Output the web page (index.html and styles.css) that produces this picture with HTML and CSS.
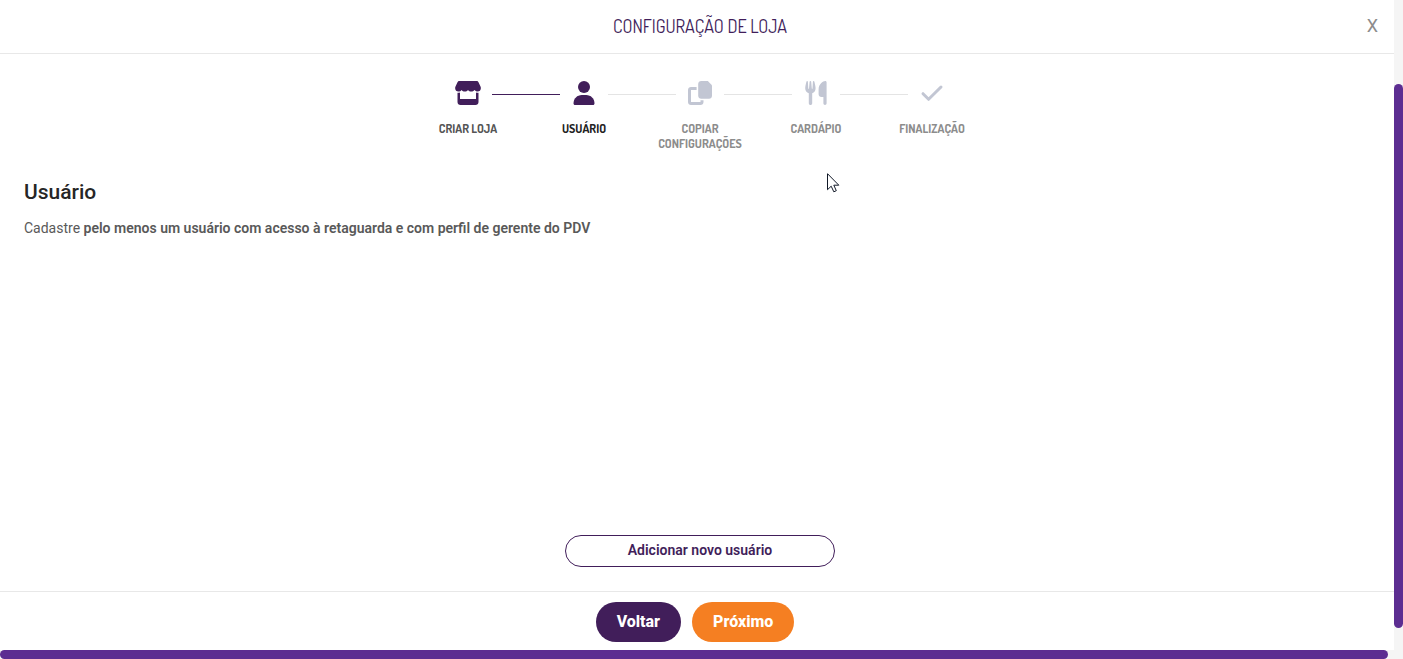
FILE: index.html
```html
<!DOCTYPE html>
<html lang="pt-BR">
<head>
    <meta charset="UTF-8">
    <meta name="viewport" content="width=device-width, initial-scale=1.0">
    <title>Configuração de Loja</title>
    <link rel="stylesheet" href="styles.css">
</head>

<body>
    <div class="modal">
        <!-- title bar -->
        <header class="modal-header">
            <h1 class="modal-title">CONFIGURAÇÃO DE LOJA</h1>
            <button type="button" class="close" aria-label="Fechar">X</button>
        </header>

        <main class="modal-body">
            <!-- setup steps -->
            <ol class="steps">
                <li class="step done">
                    <svg class="step-icon" viewBox="0 0 26 26">
                        <path d="M4.500 1h17c1 0 1.600.400 2 1.200l2 4.300c1.100 2.500-.500 5-2.900 5-1.400 0-2.400-.600-3.200-1.500-.8 1-1.900 1.500-3.200 1.500S13.800 11 13 10c-.8 1-1.900 1.500-3.200 1.500S7.400 11 6.600 10c-.8 1-1.800 1.500-3.200 1.500C1 11.500-.600 9 .500 6.500l2-4.300C2.900 1.400 3.500 1 4.500 1z"/>
                        <path d="M2.500 12.800c.9.100 1.700 0 2.500-.200V19h16v-6.400c.8.200 1.600.300 2.500.200V22c0 1.700-1.300 3-3 3h-15c-1.700 0-3-1.300-3-3z"/>
                    </svg>
                    <span class="step-label">CRIAR LOJA</span>
                </li>
                <li class="step active">
                    <svg class="step-icon" viewBox="0 0 26 26">
                        <circle cx="13" cy="7" r="6"/>
                        <path d="M2.500 23.500c0-5 3.700-8.500 8.300-8.500h4.400c4.600 0 8.300 3.500 8.300 8.500 0 .9-.6 1.500-1.500 1.500H4c-.9 0-1.500-.6-1.500-1.500z"/>
                    </svg>
                    <span class="step-label">USUÁRIO</span>
                </li>
                <li class="step">
                    <svg class="step-icon" viewBox="0 0 26 26">
                        <path d="M14.200 1h6.600L25 5.200v10.600c0 1.700-1.300 3-3 3h-7.800c-1.700 0-3-1.300-3-3V4c0-1.700 1.300-3 3-3z"/>
                        <path d="M4 7h5.600v3H4v12h9.500v-1.800h3V22c0 1.700-1.300 3-3 3H4c-1.700 0-3-1.300-3-3V10c0-1.700 1.300-3 3-3z"/>
                    </svg>
                    <span class="step-label">COPIAR CONFIGURAÇÕES</span>
                </li>
                <li class="step">
                    <svg class="step-icon" viewBox="0 0 26 26">
                        <path d="M3.400 1.800c.1-1 1.500-1 1.500 0l.4 6.700c.1.500.6.500.7 0l.6-6.700c.1-1 1.500-1 1.600 0l.6 6.700c.1.500.6.500.7 0l.4-6.700c0-1 1.400-1 1.500 0 .7 3 1.200 5 1.200 6.500 0 2.500-1.300 4.200-3.400 4.900v10c0 2.400-3.400 2.400-3.400 0v-10c-2.100-.7-3.600-2.400-3.600-4.900 0-1.500.5-3.500 1.200-6.500z"/>
                        <path d="M22.200 1c.8 0 1.400.6 1.400 1.400v20.900c0 2.200-3.200 2.200-3.200 0v-6.200h-2c-1.600 0-2.800-1.300-2.800-2.800V9.500C15.600 4 20 1 22.200 1z"/>
                    </svg>
                    <span class="step-label">CARDÁPIO</span>
                </li>
                <li class="step">
                    <svg class="step-icon" viewBox="0 0 26 26">
                        <path class="check" d="M4 13.700l5.600 5.600L22 7"/>
                    </svg>
                    <span class="step-label">FINALIZAÇÃO</span>
                </li>
            </ol>

            <h2 class="section-title">Usuário</h2>
            <p class="section-text">Cadastre <strong>pelo menos um usuário com acesso à retaguarda e com perfil de gerente do PDV</strong></p>

            <button type="button" class="btn-add">Adicionar novo usuário</button>
        </main>

        <footer class="modal-footer">
            <button type="button" class="btn btn-back">Voltar</button>
            <button type="button" class="btn btn-next">Próximo</button>
        </footer>
    </div>

    <!-- scroll bars lie over the modal -->
    <div class="scroll-y"><div class="thumb"></div></div>
    <div class="scroll-x"><div class="thumb"></div></div>

    <svg class="pointer" viewBox="0 0 13 20" width="13" height="20">
        <path d="M.5.700v16l3.700-3.500 2.600 5.600 2.500-1.100-2.500-5.500h5z"/>
    </svg>
</body>
</html>
```
FILE: styles.css
```css
* {
    box-sizing: border-box;
}

body {
    margin: 0;
    height: 100vh;
    overflow: hidden;
    background-color: #fff;
    color: #595959;
    font-family: Roboto, sans-serif;
    font-size: 14px;
}

button {
    font-family: inherit;
    cursor: pointer;
}

/* Modal */
.modal {
    display: flex;
    flex-direction: column;
    height: 100%;
    margin-right: 3px;
    padding-bottom: 9px;
}

.modal-header {
    display: grid;
    grid-template-columns: 1fr auto 1fr;
    align-items: center;
    height: 54px;
    padding: 0 16px 2px;
    border-bottom: 1px solid #e8e8e8;
}

.modal-title {
    grid-column: 2;
    margin: 0;
    color: #411e5a;
    font-family: Dosis, Roboto, sans-serif;
    font-size: 18px;
    font-weight: 400;
}

.close {
    justify-self: end;
    padding: 0 6px;
    border: none;
    background: none;
    color: #8c8c8c;
    font-size: 18px;
}

.modal-body {
    flex: 1;
    display: flex;
    flex-direction: column;
    padding: 26px 24px 24px;
}

/* Steps */
.steps {
    display: flex;
    justify-content: center;
    margin: 0;
    padding: 0;
    list-style: none;
}

.step {
    position: relative;
    display: flex;
    flex-direction: column;
    align-items: center;
    gap: 15px;
    width: 116px;
    color: #8c8c8c;
}

/* line to the next step */
.step:not(:last-child)::after {
    content: "";
    position: absolute;
    top: 14px;
    left: 82px;
    width: 68px;
    height: 1px;
    background-color: #e4e4e4;
}

.step.done:not(:last-child)::after {
    background-color: #411e5a;
}

.step-icon {
    width: 26px;
    height: 26px;
    fill: #c2c6d3;
}

.check {
    fill: none;
    stroke: #c2c6d3;
    stroke-width: 3;
    stroke-linecap: round;
    stroke-linejoin: round;
}

.done .step-icon,
.active .step-icon {
    fill: #411e5a;
}

.step-label {
    width: 100px;
    font-family: Dosis, Roboto, sans-serif;
    font-size: 12px;
    font-weight: 700;
    line-height: 15px;
    text-align: center;
}

.done .step-label {
    color: #555;
}

.active .step-label {
    color: #222;
}

/* Content */
.section-title {
    margin: 28px 0 0;
    color: #262626;
    font-size: 21px;
    font-weight: 500;
    line-height: 26px;
}

.section-text {
    margin: 12px 0 0;
    line-height: 22px;
}

.section-text strong {
    font-weight: 600;
}

.btn-add {
    align-self: center;
    width: 270px;
    height: 32px;
    margin-top: auto;
    padding: 0 0 2px;
    border: 1px solid #411e5a;
    border-radius: 16px;
    background-color: #fff;
    color: #411e5a;
    font-size: 14px;
    font-weight: 600;
}

/* Footer */
.modal-footer {
    display: flex;
    justify-content: center;
    gap: 11px;
    padding: 10px 10px 8px 0;
    border-top: 1px solid #e8e8e8;
}

.btn {
    height: 40px;
    padding: 0 21px 2px;
    border: none;
    border-radius: 20px;
    color: #fff;
    font-size: 16px;
    font-weight: 800;
}

.btn-back {
    background-color: #411e5a;
}

.btn-next {
    background-color: #f57f22;
}

/* Scroll bars */
.scroll-y,
.scroll-x {
    position: fixed;
    right: 0;
    bottom: 0;
    background-color: #f5f5f5;
}

.scroll-y {
    top: 0;
    width: 9px;
    padding: 84px 0 31px;
}

.scroll-x {
    left: 0;
    height: 9px;
    padding-right: 15px;
}

.thumb {
    height: 100%;
    border-radius: 5px;
    background-color: #5c2d91;
}

/* Mouse pointer */
.pointer {
    position: fixed;
    top: 173px;
    left: 827px;
    fill: #fff;
    stroke: #111827;
}
```
